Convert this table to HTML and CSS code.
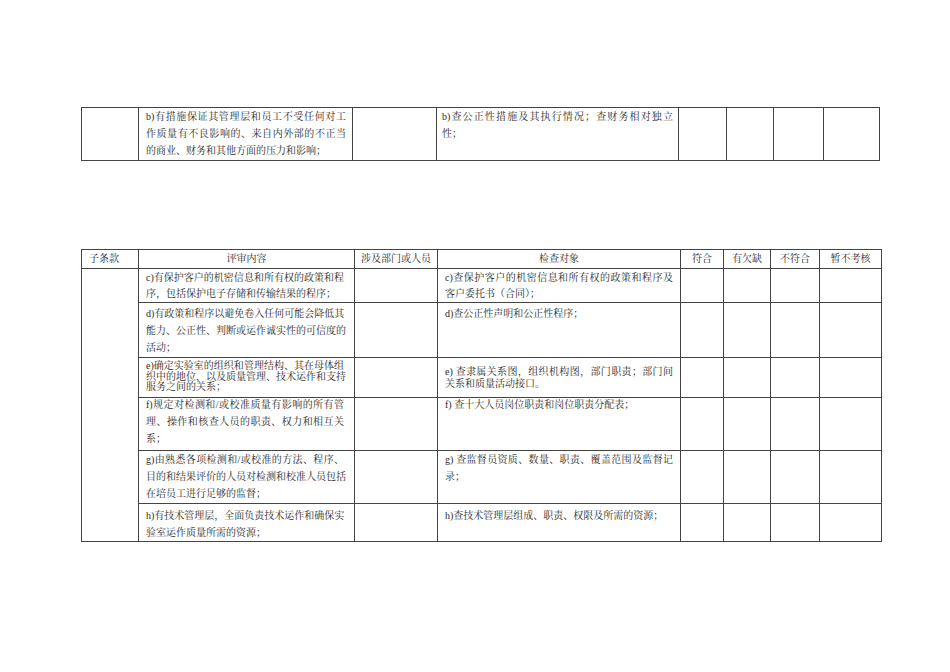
FILE: index.html
```html
<!DOCTYPE html>
<html lang="zh-CN">
<head>
<meta charset="utf-8">
<title>评审检查表</title>
<link rel="stylesheet" href="styles.css">
</head>
<body>
<div class="page">
  <table class="grid t1">
    <colgroup>
      <col class="w57"><col class="w214"><col class="w84"><col class="w242"><col class="w48"><col class="w47"><col class="w50"><col class="w56">
    </colgroup>
    <tr class="h53">
      <td></td>
      <td class="txt a">
        <div class="l">b)有措施保证其管理层和员工不受任何对工</div>
        <div class="l">作质量有不良影响的、来自内外部的不正当</div>
        <div class="e">的商业、财务和其他方面的压力和影响；</div>
      </td>
      <td></td>
      <td class="txt b">
        <div class="l">b)查公正性措施及其执行情况；查财务相对独立</div>
        <div class="e">性；</div>
      </td>
      <td></td><td></td><td></td><td></td>
    </tr>
  </table>

  <table class="grid t2">
    <colgroup>
      <col class="w57"><col class="w216"><col class="w83"><col class="w243"><col class="w43"><col class="w47"><col class="w49"><col class="w62">
    </colgroup>
    <tr class="head">
      <td class="hl"><div class="e">子条款</div></td>
      <td class="hc"><div class="c">评审内容</div></td>
      <td class="hc"><div class="c">涉及部门或人员</div></td>
      <td class="hc"><div class="c">检查对象</div></td>
      <td class="hc"><div class="c">符合</div></td>
      <td class="hc"><div class="c">有欠缺</div></td>
      <td class="hc"><div class="c">不符合</div></td>
      <td class="hc"><div class="c">暂不考核</div></td>
    </tr>
    <tr class="rc">
      <td rowspan="6"></td>
      <td class="txt a p1">
        <div class="l">c)有保护客户的机密信息和所有权的政策和程</div>
        <div class="e">序，包括保护电子存储和传输结果的程序；</div>
      </td>
      <td></td>
      <td class="txt b p1">
        <div class="l">c)查保护客户的机密信息和所有权的政策和程序及</div>
        <div class="e">客户委托书（合同）；</div>
      </td>
      <td></td><td></td><td></td><td></td>
    </tr>
    <tr class="rd">
      <td class="txt a p2">
        <div class="l">d)有政策和程序以避免卷入任何可能会降低其</div>
        <div class="l">能力、公正性、判断或运作诚实性的可信度的</div>
        <div class="e">活动；</div>
      </td>
      <td></td>
      <td class="txt b p2">
        <div class="e">d)查公正性声明和公正性程序；</div>
      </td>
      <td></td><td></td><td></td><td></td>
    </tr>
    <tr class="re">
      <td class="txt a tight">
        <div class="l">e)确定实验室的组织和管理结构、其在母体组</div>
        <div class="l">织中的地位，以及质量管理、技术运作和支持</div>
        <div class="e">服务之间的关系；</div>
      </td>
      <td></td>
      <td class="txt b mid">
        <div class="l">e) 查隶属关系图，组织机构图，部门职责；部门间</div>
        <div class="e">关系和质量活动接口。</div>
      </td>
      <td></td><td></td><td></td><td></td>
    </tr>
    <tr class="rf">
      <td class="txt a up">
        <div class="l">f)规定对检测和/或校准质量有影响的所有管</div>
        <div class="l">理、操作和核查人员的职责、权力和相互关</div>
        <div class="e">系；</div>
      </td>
      <td></td>
      <td class="txt b up">
        <div class="e">f) 查十大人员岗位职责和岗位职责分配表；</div>
      </td>
      <td></td><td></td><td></td><td></td>
    </tr>
    <tr class="rg">
      <td class="txt a">
        <div class="l">g)由熟悉各项检测和/或校准的方法、程序、</div>
        <div class="l">目的和结果评价的人员对检测和校准人员包括</div>
        <div class="e">在培员工进行足够的监督；</div>
      </td>
      <td></td>
      <td class="txt b">
        <div class="l">g) 查监督员资质、数量、职责、覆盖范围及监督记</div>
        <div class="e">录；</div>
      </td>
      <td></td><td></td><td></td><td></td>
    </tr>
    <tr class="rh">
      <td class="txt a p3">
        <div class="l">h)有技术管理层，全面负责技术运作和确保实</div>
        <div class="e">验室运作质量所需的资源；</div>
      </td>
      <td></td>
      <td class="txt b p3">
        <div class="e">h)查技术管理层组成、职责、权限及所需的资源；</div>
      </td>
      <td></td><td></td><td></td><td></td>
    </tr>
  </table>
</div>
</body>
</html>
```

FILE: styles.css
```css
html, body {
  margin: 0;
  padding: 0;
  background: #ffffff;
}

body {
  font-family: "Liberation Serif", "Noto Serif CJK SC", "Noto Sans CJK SC", serif;
  font-size: 10px;
  color: #2a2a2a;
}

.page {
  padding: 107px 0 0 81px;
}

.grid {
  border-collapse: collapse;
  table-layout: fixed;
}

.t1 { width: 798px; }
.t2 { width: 800px; margin-top: 88px; }

.grid td {
  border: 1px solid #444444;
  padding: 0;
  vertical-align: top;
  line-height: 17px;
}

.grid td div {
  height: 17px;
  white-space: nowrap;
}

.w57 { width: 57px; }
.w214 { width: 214px; }
.w84 { width: 84px; }
.w242 { width: 242px; }
.w48 { width: 48px; }
.w47 { width: 47px; }
.w50 { width: 50px; }
.w56 { width: 56px; }
.w216 { width: 216px; }
.w83 { width: 83px; }
.w243 { width: 243px; }
.w43 { width: 43px; }
.w49 { width: 49px; }
.w62 { width: 62px; }

.h53 { height: 53px; }
.head { height: 19px; }
.rc { height: 34px; }
.rd { height: 55px; }
.re { height: 40px; }
.rf { height: 53px; }
.rg { height: 53px; }
.rh { height: 38px; }

.t1 .txt.a { padding: 0 6px 0 7px; }
.t1 .txt.b { padding: 0 5px 0 5px; }
.t2 .txt.a { padding-left: 7px; padding-right: 10px; }
.t2 .txt.b { padding-left: 7px; padding-right: 7px; }

.grid td.p1 { padding-top: 1px; line-height: 16px; }
.grid td.p1 div { height: 16px; }
.grid td.p2 { padding-top: 2px; }
.grid td.p3 { padding-top: 4px; line-height: 16.5px; }
.grid td.p3 div { height: 16.5px; }
.grid td.up { padding-top: 0; }
.grid td.up div:first-child { margin-top: -2px; }

.grid td.tight { line-height: 10.7px; padding-top: 3px; }
.grid td.tight div { height: 10.7px; }
.grid td.mid { vertical-align: middle; line-height: 12px; }
.grid td.mid div { height: 12px; }

.l {
  text-align: justify;
  text-align-last: justify;
}

.e {
  text-align: left;
}

.c {
  text-align: center;
}

.grid td.hc,
.grid td.hl {
  vertical-align: middle;
  line-height: 16px;
}

.grid td.hc div,
.grid td.hl div {
  height: 16px;
}

.grid td.hl {
  padding-left: 7px;
}
```
